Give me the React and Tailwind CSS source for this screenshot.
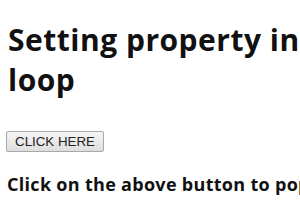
export default function App() {
  return (
    <div className="w-[300px] h-[210px] overflow-hidden bg-white">
      <div className="w-[700px] flex flex-col items-start pl-[8px] pt-[20px]">
        <h1 className="m-0 font-bold text-[30px] leading-[40px] tracking-[0.5px] text-[#111] whitespace-nowrap font-['Open_Sans','Noto_Sans',sans-serif]">
          Setting property in
          <br />
          loop
        </h1>
        <button className="mt-[31px] -ml-[2px] h-[21px] w-[98px] flex items-center justify-center border border-[#a9a9a9] rounded-[2px] bg-gradient-to-b from-[#f6f6f6] to-[#dedede] text-[13.33px] text-[#222] leading-none font-['Liberation_Sans',Arial,sans-serif]">
          CLICK HERE
        </button>
        <p className="mt-[21px] -ml-[1px] font-bold text-[18px] leading-[23px] tracking-[0.3px] text-[#111] whitespace-nowrap font-['Open_Sans','Noto_Sans',sans-serif]">
          Click on the above button to pop
        </p>
      </div>
    </div>
  );
}
